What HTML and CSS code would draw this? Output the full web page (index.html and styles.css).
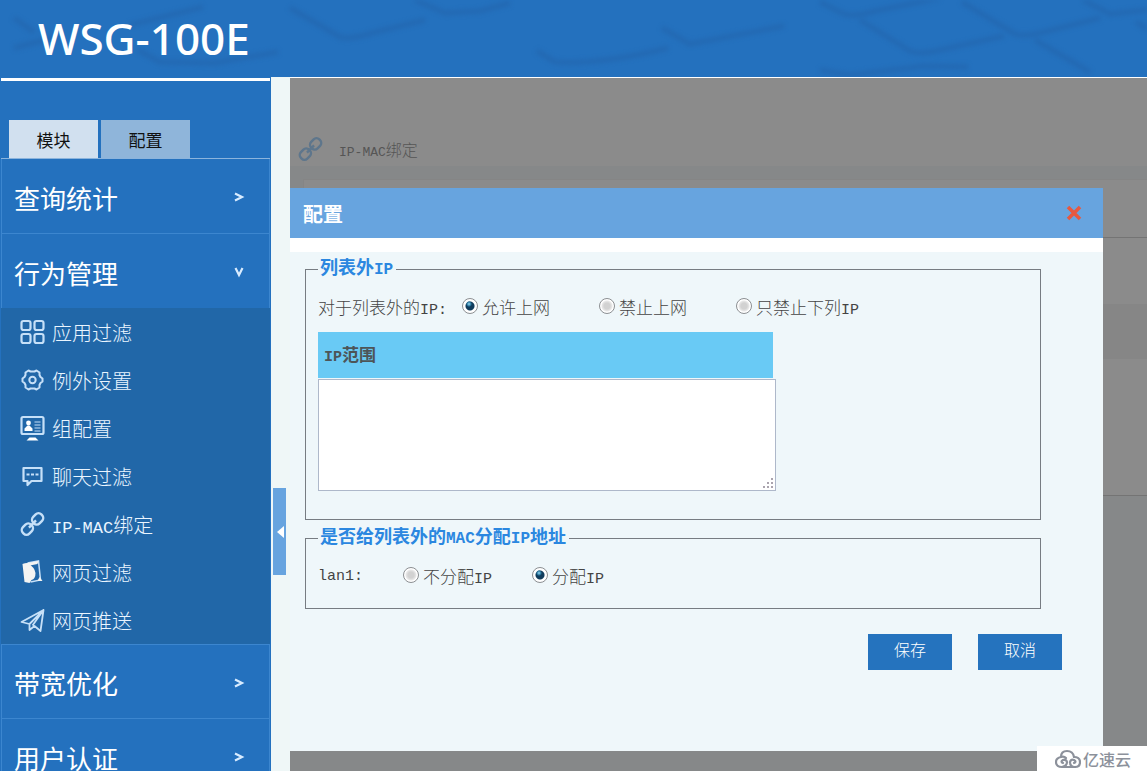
FILE: index.html
```html
<!DOCTYPE html>
<html lang="zh-CN">
<head>
<meta charset="utf-8">
<title>WSG-100E</title>
<link rel="stylesheet" href="styles.css">
</head>
<body>
<svg class="defs" aria-hidden="true">
  <symbol id="chevron" viewBox="0 0 12 12"><path d="M2 2.500L9 6L2 9.500" fill="none" stroke="currentColor" stroke-width="2.200"/></symbol>
  <symbol id="link" viewBox="0 0 24 24"><g fill="none" stroke="currentColor" stroke-width="2.400" transform="rotate(-45 12 12)"><rect x="-1" y="7.500" width="11.500" height="9" rx="4"/><rect x="13.500" y="7.500" width="11.500" height="9" rx="4"/><path d="M7 12h10"/></g></symbol>
</svg>
<header class="banner">
  <svg class="banner-art" viewBox="0 0 1147 77" preserveAspectRatio="none" aria-hidden="true">
    <g fill="none" stroke="#2364ac" stroke-opacity=".6" stroke-width="5" stroke-linejoin="round">
      <path d="M14 18L34 32M14 48L60 36M130 25L203 7M138 50L160 62L215 63L278 52"/>
      <path d="M290 8L340 37Q350 40 372 33L425 20M415 0L445 13L480 11L510 3"/>
      <path d="M537 51L555 62Q600 65 668 48M662 28L690 44L784 26"/>
      <path d="M820 2L842 13Q852 18 875 11L940 -2M860 20L910 51Q920 55 940 50L1004 36"/>
      <path d="M962 2L1015 34Q1024 37 1040 33L1100 18M1035 40L1090 72M1083 0L1110 14L1147 10M1136 22L1147 29"/>
      <path d="M820 70L850 75L925 66L968 67"/>
    </g>
  </svg>
  <h1 class="logo">WSG-100E</h1>
</header>
<div class="shell">
  <aside class="sidebar">
    <div class="tabs">
      <button class="tab tab-active" type="button">模块</button>
      <button class="tab" type="button">配置</button>
    </div>
    <nav class="menu">
      <a class="group" href="#stats">查询统计<svg class="arrow"><use href="#chevron"/></svg></a>
      <a class="group" href="#behavior">行为管理<svg class="arrow arrow-open"><use href="#chevron"/></svg></a>
      <div class="submenu">
        <a class="item" href="#app"><svg class="icon" viewBox="0 0 24 24"><g fill="none" stroke="currentColor" stroke-width="2.200"><rect x="1" y="1" width="9" height="9" rx="2"/><rect x="14" y="1" width="9" height="9" rx="2"/><rect x="1" y="14" width="9" height="9" rx="2"/><rect x="14" y="14" width="9" height="9" rx="2"/></g></svg>应用过滤</a>
        <a class="item" href="#except"><svg class="icon" viewBox="0 0 24 24"><g fill="none" stroke="currentColor" stroke-width="2" stroke-linejoin="round"><path d="M8 2.500L10 3.500H14L16 2.500L19 4.500V7L20 9L22 10.500V13.500L20 15L19 17V19.500L16 21.500L14 20.500H10L8 21.500L5 19.500V17L4 15L2 13.500V10.500L4 9L5 7V4.500Z"/><circle cx="12" cy="12" r="3.200"/></g></svg>例外设置</a>
        <a class="item" href="#groups"><svg class="icon" viewBox="0 0 24 24"><rect x="1" y="1" width="22" height="17" rx="1.500" fill="none" stroke="currentColor" stroke-width="2.200"/><circle cx="8" cy="7" r="2.400" fill="#fff"/><path d="M4 15v-2.500L7 9.500H9L12 12.500V15ZM9 21.500h6l3 3H6Z" fill="#fff"/><path d="M14 6h6M14 9h6M14 12h6M14 15h6" stroke="currentColor" stroke-width="1.200"/></svg>组配置</a>
        <a class="item" href="#chat"><svg class="icon" viewBox="0 0 24 24"><path d="M3 4H21V17H11L7 21V17H3Z" fill="none" stroke="currentColor" stroke-width="2.200" stroke-linejoin="round"/><path d="M6 10.500h3M10.500 10.500h3M15 10.500h3" stroke="currentColor" stroke-width="2"/></svg>聊天过滤</a>
        <a class="item" href="#ipmac"><svg class="icon"><use href="#link"/></svg><span><span class="latin">IP-MAC</span>绑定</span></a>
        <a class="item" href="#web"><svg class="icon" viewBox="0 0 24 24"><path d="M7 3L18 1L20 20L10 22" fill="none" stroke="currentColor" stroke-width="1.500"/><path d="M2 4L7 3Q14 7 15 13Q15 19 11 20L9 23L4 22Z" fill="#f4f4f2"/><path d="M19 17L22 21L17 21ZM2 4L18 1L17 4L7 6Z" fill="#f4f4f2"/></svg>网页过滤</a>
        <a class="item" href="#push"><svg class="icon" viewBox="0 0 24 24"><path d="M1 14L23 2L20 23L14 18L9 22V16ZM9 16L23 2L12 17.500" fill="none" stroke="currentColor" stroke-width="1.800" stroke-linejoin="round"/></svg>网页推送</a>
      </div>
      <a class="group" href="#bandwidth">带宽优化<svg class="arrow"><use href="#chevron"/></svg></a>
      <a class="group" href="#auth">用户认证<svg class="arrow"><use href="#chevron"/></svg></a>
    </nav>
  </aside>
  <div class="gutter"><button class="collapse" type="button" aria-label="收起"></button></div>
  <main class="content">
    <div class="page-title"><svg class="icon icon-title"><use href="#link"/></svg><span><span class="latin">IP-MAC</span>绑定</span></div>
    <div class="panel">
      <div class="band band-first"></div>
      <div class="band band-tools"></div>
      <div class="band band-head"></div>
      <div class="band band-rows"></div>
    </div>
    <section class="dialog" role="dialog" aria-labelledby="dialog-title">
      <div class="dialog-bar">
        <h2 class="dialog-title" id="dialog-title">配置</h2>
        <button class="close" type="button" aria-label="关闭"><svg class="close-icon" viewBox="0 0 16 16"><path d="M2 2L14 14M14 2L2 14" stroke="#e8583f" stroke-width="3.500"/></svg></button>
      </div>
      <form class="form">
        <fieldset class="box">
          <legend>列表外<span class="latin">IP</span></legend>
          <div class="row">
            <span class="caption">对于列表外的<span class="latin">IP:</span></span>
            <label class="choice"><input type="radio" name="outside" checked>允许上网</label>
            <label class="choice"><input type="radio" name="outside">禁止上网</label>
            <label class="choice"><input type="radio" name="outside"><span>只禁止下列<span class="latin">IP</span></span></label>
          </div>
          <label class="range-head" for="range"><span><span class="latin">IP</span>范围</span></label>
          <div class="range-wrap">
            <textarea class="range" id="range"></textarea>
            <svg class="grip" viewBox="0 0 12 12" aria-hidden="true"><path d="M9 1h2v2h-2zM9 5h2v2h-2zM5 5h2v2h-2zM9 9h2v2h-2zM5 9h2v2h-2zM1 9h2v2h-2z" fill="#aaa4ae"/></svg>
          </div>
        </fieldset>
        <fieldset class="box box-lan">
          <legend>是否给列表外的<span class="latin">MAC</span>分配<span class="latin">IP</span>地址</legend>
          <div class="row">
            <span class="caption"><span class="latin">lan1:</span></span>
            <label class="choice"><input type="radio" name="lan1"><span>不分配<span class="latin">IP</span></span></label>
            <label class="choice"><input type="radio" name="lan1" checked><span>分配<span class="latin">IP</span></span></label>
          </div>
        </fieldset>
        <div class="actions">
          <button class="btn" type="submit">保存</button>
          <button class="btn" type="button">取消</button>
        </div>
      </form>
    </section>
  </main>
</div>
<div class="watermark">
  <svg class="cloud" viewBox="0 0 26 20"><g fill="none" stroke="currentColor" stroke-width="2.200" stroke-linecap="round"><path d="M6 8Q6 2 12 2Q18 2 19 8"/><path d="M19 8Q25 8 25 13Q25 18 20 18Q15 18 15 13Q16 10 19 11Q22 13 19 14"/><path d="M11 9Q9 7 6 8Q1 9 1 13Q1 18 7 18H20M7 18Q12 17 12 13Q11 10 8 11Q5 13 8 14"/></g></svg>
  <span>亿速云</span>
</div>
</body>
</html>
```

FILE: styles.css
```css
* { box-sizing: border-box; }

body {
  margin: 0;
  height: 100vh;
  display: flex;
  flex-direction: column;
  overflow: hidden;
  position: relative;
  background: #eff7f9;
  color: #444;
  font-family: "Liberation Serif", "Noto Sans CJK SC", sans-serif;
  font-size: 17px;
  font-weight: 300;
}

button, textarea { font-family: inherit; }
button { border: 0; cursor: pointer; }
a { text-decoration: none; }
.defs { display: none; }
.latin { font-family: "Liberation Mono", monospace; font-size: 15px; }

.banner {
  flex: none;
  height: 77px;
  position: relative;
  background: #2471be;
}
.banner-art { position: absolute; inset: 0; width: 100%; height: 100%; filter: blur(2px); }
.logo {
  position: relative;
  margin: 0;
  padding-left: 38px;
  line-height: 77px;
  color: #fff;
  font-family: "Noto Sans", "Open Sans", sans-serif;
  font-size: 44px;
  font-weight: 500;
}

.shell { flex: 1; min-height: 0; display: flex; }

.sidebar {
  flex: none;
  width: 271px;
  overflow: hidden;
  border: 1px solid #2471be;
  border-bottom: 0;
  background: #2471be;
}
.tabs {
  display: flex;
  align-items: flex-end;
  gap: 3px;
  height: 81px;
  padding: 0 8px;
  border-top: 3px solid #fff;
  border-bottom: 1px solid #8bb4dd;
}
.tab {
  width: 89px;
  height: 38px;
  padding: 0;
  background: #8fb5da;
  color: #111;
  font-size: 17px;
}
.tab-active { background: #d1e0ef; }

.group {
  display: flex;
  align-items: center;
  justify-content: space-between;
  height: 75px;
  padding: 2px 24px 0 12px;
  border: 1px solid #3c86cf;
  border-top: 0;
  color: #fff;
  font-size: 26px;
  font-weight: 400;
}
.submenu + .group { border-top: 1px solid #3c86cf; }
.arrow { width: 12px; height: 12px; color: #d9ecff; }
.arrow-open { transform: rotate(90deg); }

.submenu { margin-top: -1px; background: #2167a8; }
.item {
  display: flex;
  align-items: center;
  gap: 7px;
  height: 48px;
  padding-left: 19px;
  color: #eaf5ff;
  font-size: 20px;
}
.item .latin { font-size: 17px; }
.icon { width: 25px; height: 24px; color: #c6e0f8; overflow: visible; }

.gutter {
  flex: none;
  width: 19px;
  padding: 411px 2px 0;
  background: #eff7f7;
}
.collapse {
  display: flex;
  align-items: center;
  justify-content: flex-end;
  width: 13px;
  height: 87px;
  padding: 0 2px;
  background: #67a4df;
}
.collapse::before {
  content: "";
  border: 6px solid transparent;
  border-left-width: 0;
  border-right: 7px solid #fff;
}

.content {
  flex: 1;
  min-width: 0;
  position: relative;
  overflow: hidden;
  border-top: 1px solid #fff;
  background: #868889;
}
.page-title {
  display: flex;
  align-items: center;
  gap: 16px;
  height: 88px;
  padding: 54px 8px 0;
  background: #8b8b8b;
  color: #555;
  font-size: 16px;
}
.page-title .latin { font-size: 13px; }
.icon-title { color: #5e768c; }
.panel { margin: 13px 0 0 13px; border: 1px solid #858585; border-width: 1px 0 0 1px; background: #8b8b8b; }
.band-first { height: 58px; border-bottom: 1px solid #747474; }
.band-tools { height: 66px; }
.band-head { height: 55px; background: #868686; }
.band-rows { height: 137px; border-bottom: 1px solid #747474; }

.dialog {
  position: absolute;
  top: 110px;
  left: 0;
  right: 44px;
  background: #eff7fa;
}
.dialog-bar {
  display: flex;
  align-items: center;
  justify-content: space-between;
  height: 50px;
  padding: 0 21px 0 13px;
  background: #67a4df;
}
.dialog-title { margin: 0; color: #fff; font-size: 20px; }
.close { display: flex; padding: 0; background: none; }
.close-icon { width: 16px; height: 16px; }
.form { padding: 4px 62px 81px 15px; border-top: 14px solid #fff; }

.box {
  min-width: 0;
  margin: 0 0 5px;
  padding: 7px 12px 28px;
  border: 1px solid #777c82;
}
.box-lan { padding-bottom: 16px; margin-bottom: 25px; }
legend {
  padding: 0 3px 0 2px;
  color: #2b87e0;
  font-size: 18px;
  font-weight: 700;
  line-height: 24px;
}
legend .latin { font-size: 16px; }
.row { display: flex; align-items: center; height: 34px; margin-bottom: 9px; }
.box-lan .row { margin-bottom: 0; }
.caption { width: 144px; white-space: nowrap; }
.box-lan .caption { width: 85px; }
.choice { display: flex; align-items: center; gap: 4px; width: 137px; white-space: nowrap; }
.box-lan .choice { width: 129px; }

input[type="radio"] {
  appearance: none;
  flex: none;
  width: 16px;
  height: 16px;
  margin: 0;
  border: 1px solid #8c8f92;
  border-radius: 50%;
  background: radial-gradient(circle, #d2d2d2 0 3px, #e8e8e8 5px, #fff 6px);
}
input[type="radio"]:checked {
  background: radial-gradient(circle at 6px 5px, #9bdcf5 0, #26749c 2px, transparent 3px), radial-gradient(circle, #103c5c 0 4px, #fff 5px);
}

.range-head {
  display: flex;
  align-items: center;
  width: 455px;
  height: 46px;
  padding: 0 6px 4px;
  background: #69caf5;
  color: #4d5558;
  font-weight: 700;
}
.range-wrap { position: relative; width: 458px; margin-top: 1px; }
.range {
  display: block;
  width: 100%;
  height: 112px;
  margin: 0;
  border: 1px solid #aeb8ca;
  background: #fff;
  resize: none;
}
.grip { position: absolute; right: 2px; bottom: 2px; width: 12px; height: 12px; }

.actions { display: flex; justify-content: flex-end; gap: 26px; margin-right: -21px; }
.btn {
  width: 84px;
  height: 36px;
  padding: 0 0 6px;
  background: #2573be;
  color: #fff;
  font-size: 16px;
  font-weight: 300;
}

.watermark {
  position: absolute;
  right: 0;
  bottom: 0;
  display: flex;
  align-items: center;
  gap: 2px;
  height: 25px;
  padding: 0 16px 0 18px;
  background: #fff;
  color: #8c919b;
  font-size: 16px;
  font-weight: 500;
}
.cloud { width: 26px; height: 20px; }
```
